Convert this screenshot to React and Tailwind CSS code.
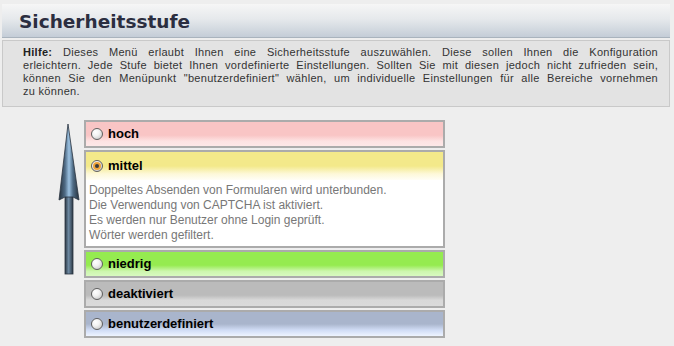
import React from "react";

function Radio({ checked }) {
  return (
    <span className="relative inline-flex h-[12px] w-[12px] shrink-0 items-center justify-center rounded-full border border-[#5f5f5f] bg-[radial-gradient(circle_at_35%_30%,#ffffff_0%,#f2f2f2_40%,#bdbdbd_100%)]">
      {checked && (
        <span className="flex h-[8px] w-[8px] items-center justify-center rounded-full bg-[#f0a43a]">
          <span className="h-[4px] w-[4px] rounded-full bg-[#3a3a3a]" />
        </span>
      )}
    </span>
  );
}

function Level({ label, grad, checked }) {
  return (
    <div className={`flex h-[28px] items-center gap-[5px] border-2 border-[#ababab] pl-[5px] ${grad}`}>
      <Radio checked={checked} />
      <span className="text-[13px] font-bold text-black">{label}</span>
    </div>
  );
}

export default function App() {
  const lines = [
    <>
      <b className="text-[#222]">Hilfe:</b> Dieses Menü erlaubt Ihnen eine Sicherheitsstufe auszuwählen. Diese sollen Ihnen die Konfiguration
    </>,
    <>erleichtern. Jede Stufe bietet Ihnen vordefinierte Einstellungen. Sollten Sie mit diesen jedoch nicht zufrieden sein,</>,
    <>können Sie den Menüpunkt "benutzerdefiniert" wählen, um individuelle Einstellungen für alle Bereiche vornehmen</>,
  ];
  return (
    <div className="min-h-[346px] w-[674px] bg-[#eeeeee] pt-[4px] pl-[2px] pr-[4px] font-['Liberation_Sans',Arial,sans-serif]">
      <div className="flex h-[34px] items-center border-b border-[#a9b3bd] bg-[linear-gradient(#f6f6f6_0%,#e6e9ec_45%,#c4cdd7_100%)] pl-[17px] pt-[2px]">
        <span className="font-['DejaVu_Sans',sans-serif] text-[18.5px] font-bold text-[#2b2e40]">Sicherheitsstufe</span>
      </div>
      <div className="mt-[2px] border border-[#c9c9c9] bg-[#e3e3e3] pt-[5px] pb-[8px] pl-[20px] pr-[11px] text-[11px] leading-[13px] tracking-[0.3px] text-[#333]">
        {lines.map((l, i) => (
          <div key={i} className="text-justify [text-align-last:justify]">{l}</div>
        ))}
        <div>zu können.</div>
      </div>

      <div className="mt-[13px] flex">
        <svg className="ml-[49px] shrink-0" width="31" height="222" viewBox="0 0 31 222">
          <defs>
            <linearGradient id="ag" x1="0" x2="1" y1="0" y2="0">
              <stop offset="0" stopColor="#26313c" />
              <stop offset="0.3" stopColor="#4f6b85" />
              <stop offset="0.5" stopColor="#9cc2e2" />
              <stop offset="0.7" stopColor="#4f6b85" />
              <stop offset="1" stopColor="#26313c" />
            </linearGradient>
            <linearGradient id="sg" x1="0" x2="1" y1="0" y2="0">
              <stop offset="0" stopColor="#2c3844" />
              <stop offset="0.45" stopColor="#6e8aa3" />
              <stop offset="1" stopColor="#2c3844" />
            </linearGradient>
          </defs>
          <rect x="14" y="76" width="8" height="78" fill="url(#sg)" stroke="#2a3440" strokeWidth="0.8" />
          <polygon points="17,4 28,80 22,77 14,77 8,80" fill="url(#ag)" stroke="#2a3440" strokeWidth="0.8" />
        </svg>

        <div className="ml-[2px] flex w-[361px] flex-col gap-[2px]">
          <Level label="hoch" grad="bg-[linear-gradient(#f9c5c5_0%,#f9c5c5_55%,#fde3e3_80%,#fde8e8_100%)]" />
          <div className="h-[98px] border-2 border-[#ababab] bg-white">
            <div className="flex h-[28px] items-center gap-[5px] bg-[linear-gradient(#f3e98a_0%,#f3e98a_50%,#fdf8d8_78%,#fffef6_100%)] pl-[5px]">
              <Radio checked />
              <span className="text-[13px] font-bold text-black">mittel</span>
            </div>
            <div className="pl-[3px] pt-[3px] text-[12px] leading-[15px] text-[#777]">
              <div>Doppeltes Absenden von Formularen wird unterbunden.</div>
              <div>Die Verwendung von CAPTCHA ist aktiviert.</div>
              <div>Es werden nur Benutzer ohne Login geprüft.</div>
              <div>Wörter werden gefiltert.</div>
            </div>
          </div>
          <Level label="niedrig" grad="bg-[linear-gradient(#95eb50_0%,#95eb50_55%,#cdf6ae_80%,#d8f9c0_100%)]" />
          <Level label="deaktiviert" grad="bg-[linear-gradient(#bbbbbb_0%,#bbbbbb_55%,#d8d8d8_75%,#dadada_100%)]" />
          <Level label="benutzerdefiniert" grad="bg-[linear-gradient(#a9b5cc_0%,#a9b5cc_50%,#d0dcf5_75%,#eef4ff_100%)]" />
        </div>
      </div>
    </div>
  );
}
